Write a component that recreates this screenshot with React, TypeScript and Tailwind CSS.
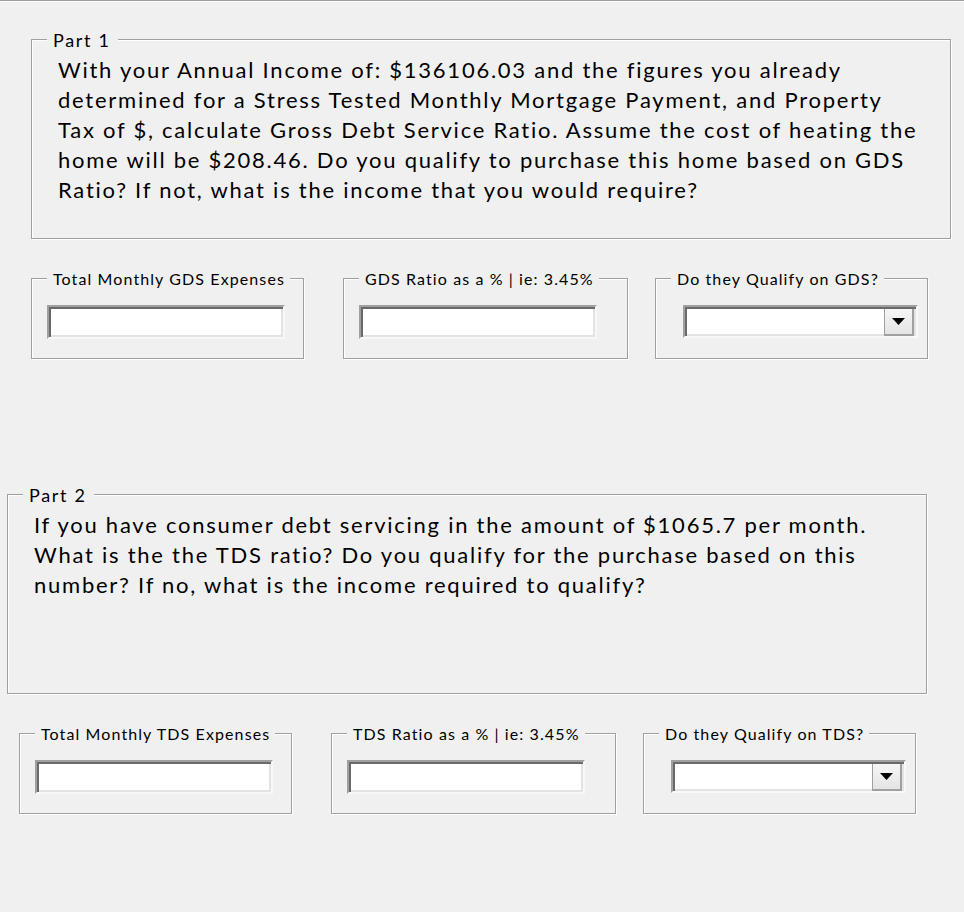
import type { ReactNode } from 'react';

const FONT = 'font-["Lato","DejaVu_Sans",sans-serif]';

const part1 = [
  'With your Annual Income of: $136106.03 and the figures you already',
  'determined for a Stress Tested Monthly Mortgage Payment, and Property',
  'Tax of $, calculate Gross Debt Service Ratio. Assume the cost of heating the',
  'home will be $208.46. Do you qualify to purchase this home based on GDS',
  'Ratio? If not, what is the income that you would require?',
];

const part2 = [
  'If you have consumer debt servicing in the amount of $1065.7 per month.',
  'What is the the TDS ratio? Do you qualify for the purchase based on this',
  'number? If no, what is the income required to qualify?',
];

// etched border like a swing TitledBorder
function PartBox({ title, lines }: { title: string; lines: string[] }) {
  return (
    <div className="box-border h-[200px] w-[920px] border border-[#a0a0a0] shadow-[inset_1px_1px_0_#fff,1px_1px_0_#fff]">
      <span className="-mt-[11px] ml-[15px] block w-fit bg-[#f0f0f0] pl-[6px] pr-[7px] text-[18px] leading-[22px] tracking-[1.7px] text-black">
        {title}
      </span>
      <div className="mt-[4px] pl-[26px] text-[22px] leading-[30px] tracking-[1.75px] text-black">
        {lines.map((l) => (
          <div key={l} className="whitespace-nowrap">
            {l}
          </div>
        ))}
      </div>
    </div>
  );
}

function SmallBox({
  title,
  width,
  children,
}: {
  title: string;
  width: string;
  children: ReactNode;
}) {
  return (
    <div
      className={`box-border h-[81px] border border-[#a0a0a0] shadow-[inset_1px_1px_0_#fff,1px_1px_0_#fff] ${width}`}
    >
      <span className="-mt-[10px] ml-[15px] block w-fit bg-[#f0f0f0] pl-[6px] pr-[5px] text-[16px] leading-[20px] tracking-[1.1px] text-black">
        {title}
      </span>
      {children}
    </div>
  );
}

const sunken =
  'box-border border-2 border-t-[#a0a0a0] border-l-[#a0a0a0] border-b-[#f8f8f8] border-r-[#f8f8f8] bg-white shadow-[inset_2px_2px_0_#6a6a6a,inset_-2px_-2px_0_#e3e3e3]';

function TextInput() {
  return <div className={`ml-[15px] mt-[16px] h-[34px] w-[238px] ${sunken}`} />;
}

function Combo() {
  return (
    <div className={`ml-[27px] mt-[16px] flex h-[33px] w-[235px] justify-end pb-[2px] pr-[2px] pt-[2px] ${sunken}`}>
      <div className="box-border flex h-[27px] w-[30px] items-center justify-center border-b-2 border-l border-r-2 border-[#a0a0a0] bg-gradient-to-b from-[#f6f6f6] to-[#e4e4e4]">
        <svg width="13" height="7" viewBox="0 0 13 7">
          <polygon points="0,0 13,0 6.5,7" fill="#000" />
        </svg>
      </div>
    </div>
  );
}

function Row({ kind }: { kind: 'GDS' | 'TDS' }) {
  return (
    <div className="flex">
      <SmallBox title={`Total Monthly ${kind} Expenses`} width="w-[273px]">
        <TextInput />
      </SmallBox>
      <div className="ml-[39px]">
        <SmallBox title={`${kind} Ratio as a % | ie: 3.45%`} width="w-[285px]">
          <TextInput />
        </SmallBox>
      </div>
      <div className="ml-[27px]">
        <SmallBox title={`Do they Qualify on ${kind}?`} width="w-[273px]">
          <Combo />
        </SmallBox>
      </div>
    </div>
  );
}

export default function App() {
  return (
    <div className={`min-h-[912px] w-[964px] bg-[#f0f0f0] ${FONT}`}>
      <div className="h-[2px] border-t border-[#a0a0a0] bg-white" />
      <div className="pl-[31px] pt-[37px]">
        <PartBox title="Part 1" lines={part1} />
      </div>
      <div className="pl-[31px] pt-[39px]">
        <Row kind="GDS" />
      </div>
      <div className="pl-[7px] pt-[135px]">
        <PartBox title="Part 2" lines={part2} />
      </div>
      <div className="pl-[19px] pt-[39px]">
        <Row kind="TDS" />
      </div>
    </div>
  );
}
